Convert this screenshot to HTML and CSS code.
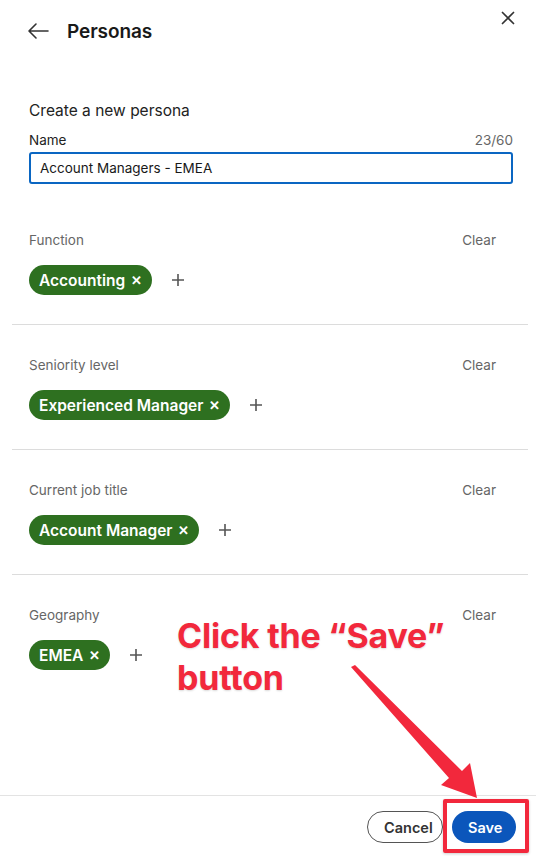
FILE: index.html
```html
<!DOCTYPE html>
<html lang="en">
<head>
<meta charset="utf-8">
<title>Personas</title>
<link rel="stylesheet" href="styles.css">
</head>
<body>
<div class="panel">
  <header class="header">
    <div class="header-left">
      <button class="icon-btn back" aria-label="Back">
        <svg width="24" height="24" viewBox="0 0 24 24"><path d="M22 12H3.5M10 5l-7 7 7 7" fill="none" stroke="#333" stroke-width="1.6" stroke-linecap="round" stroke-linejoin="round"/></svg>
      </button>
      <h1 class="title">Personas</h1>
    </div>
    <button class="icon-btn close" aria-label="Close">
      <svg width="14" height="14" viewBox="0 0 14 14"><path d="M1.5 1.5l11 11M12.5 1.5l-11 11" stroke="#333" stroke-width="1.7" stroke-linecap="round"/></svg>
    </button>
  </header>

  <main class="content">
    <div class="form">
      <div class="form-title">Create a new persona</div>
      <div class="field-row">
        <label class="field-label">Name</label>
        <span class="counter">23/60</span>
      </div>
      <div class="input">Account Managers - EMEA</div>
    </div>

    <section class="section">
      <div class="section-head"><span class="section-label">Function</span><span class="clear">Clear</span></div>
      <div class="chips">
        <span class="chip">Accounting <span class="x">✕</span></span>
        <span class="plus"><svg width="14" height="14" viewBox="0 0 14 14"><path d="M7 1v12M1 7h12" stroke="#555" stroke-width="1.6"/></svg></span>
      </div>
    </section>

    <section class="section">
      <div class="section-head"><span class="section-label">Seniority level</span><span class="clear">Clear</span></div>
      <div class="chips">
        <span class="chip">Experienced Manager <span class="x">✕</span></span>
        <span class="plus"><svg width="14" height="14" viewBox="0 0 14 14"><path d="M7 1v12M1 7h12" stroke="#555" stroke-width="1.6"/></svg></span>
      </div>
    </section>

    <section class="section">
      <div class="section-head"><span class="section-label">Current job title</span><span class="clear">Clear</span></div>
      <div class="chips">
        <span class="chip">Account Manager <span class="x">✕</span></span>
        <span class="plus"><svg width="14" height="14" viewBox="0 0 14 14"><path d="M7 1v12M1 7h12" stroke="#555" stroke-width="1.6"/></svg></span>
      </div>
    </section>

    <section class="section last">
      <div class="section-head"><span class="section-label">Geography</span><span class="clear">Clear</span></div>
      <div class="chips">
        <span class="chip">EMEA <span class="x">✕</span></span>
        <span class="plus"><svg width="14" height="14" viewBox="0 0 14 14"><path d="M7 1v12M1 7h12" stroke="#555" stroke-width="1.6"/></svg></span>
      </div>
    </section>
  </main>

  <footer class="footer">
    <button class="btn btn-secondary">Cancel</button>
    <button class="btn btn-primary">Save</button>
  </footer>

  <div class="callout">Click the “Save”<br>button</div>
  <svg class="arrow" width="536" height="856" viewBox="0 0 536 856">
    <polygon points="351,667 355,665 462,771 470,763 477,798 441,785 449,778" fill="#f2283c"/>
  </svg>
  <div class="highlight"></div>
</div>
</body>
</html>
```

FILE: styles.css
```css
* { box-sizing: border-box; }
html, body { margin: 0; padding: 0; background: #fff; }
body {
  font-family: Inter, "Noto Sans", "Liberation Sans", sans-serif;
  color: #191919;
}
.panel {
  position: relative;
  width: 536px;
  height: 856px;
  display: flex;
  flex-direction: column;
  overflow: hidden;
}
.header {
  display: flex;
  justify-content: space-between;
  align-items: flex-start;
  height: 62px;
  padding: 0 20px 0 25px;
}
.header-left {
  display: flex;
  align-items: center;
  height: 62px;
  gap: 16px;
}
.icon-btn {
  background: none;
  border: 0;
  padding: 0;
  display: flex;
  align-items: center;
  justify-content: center;
  cursor: pointer;
}
.back { width: 26px; height: 24px; }
.close { width: 16px; height: 16px; margin-top: 10px; }
.title {
  margin: 0;
  font-size: 19px;
  font-weight: 600;
  color: #191919;
  letter-spacing: -0.1px;
}
.content { flex: 1; }
.form {
  padding: 39px 23px 0 29px;
  margin-bottom: 16px;
}
.form-title {
  font-size: 15.5px;
  line-height: 20px;
  color: #222;
}
.field-row {
  display: flex;
  justify-content: space-between;
  margin-top: 10px;
  font-size: 13.5px;
  line-height: 18px;
}
.field-label { color: #222; }
.counter { color: #666; }
.input {
  margin-top: 3px;
  height: 32px;
  border: 2px solid #0a66c2;
  border-radius: 3px;
  padding: 0 9px;
  display: flex;
  align-items: center;
  font-size: 13.5px;
  color: #191919;
}
.section {
  margin: 0 8px 0 12px;
  padding: 31px 32px 29px 17px;
  border-bottom: 1px solid #dcdcdc;
}
.section.last { border-bottom: 0; }
.section-head {
  display: flex;
  justify-content: space-between;
  font-size: 13.5px;
  line-height: 18px;
  color: #666;
}
.chips {
  margin-top: 16px;
  display: flex;
  align-items: center;
  gap: 19px;
}
.chip {
  display: inline-flex;
  align-items: center;
  height: 30px;
  padding: 0 10px 0 10px;
  border-radius: 15px;
  background: #2e7020;
  color: #fff;
  font-size: 15.5px;
  font-weight: 600;
  white-space: pre;
}
.chip .x { font-size: 13px; font-weight: 600; margin-left: 2px; }
.plus { display: flex; width: 14px; height: 14px; }
.footer {
  border-top: 1px solid #e3e3e3;
  height: 61px;
  display: flex;
  justify-content: flex-end;
  align-items: flex-start;
  padding: 15px 20px 0 0;
  gap: 9px;
}
.btn {
  height: 32px;
  border-radius: 16px;
  font-family: inherit;
  font-size: 14.5px;
  font-weight: 600;
  padding: 0 16px;
  cursor: pointer;
}
.btn-secondary {
  width: 76px;
  background: #fff;
  border: 1px solid #555;
  color: #333;
}
.btn-primary {
  width: 64px;
  background: #0b56bb;
  border: 0;
  color: #fff;
}
.callout {
  position: absolute;
  left: 177px;
  top: 615px;
  font-size: 34px;
  line-height: 42px;
  font-weight: 700;
  color: #f2283c;
  letter-spacing: -0.2px;
  text-shadow: 0 1px 2px rgba(0,0,0,0.15);
}
.arrow { position: absolute; left: 0; top: 0; pointer-events: none; }
.highlight {
  position: absolute;
  left: 443px;
  top: 799px;
  width: 86px;
  height: 54px;
  border: 4px solid #f2283c;
  border-radius: 2px;
  box-shadow: 0 1px 3px rgba(0,0,0,0.2);
}
```
